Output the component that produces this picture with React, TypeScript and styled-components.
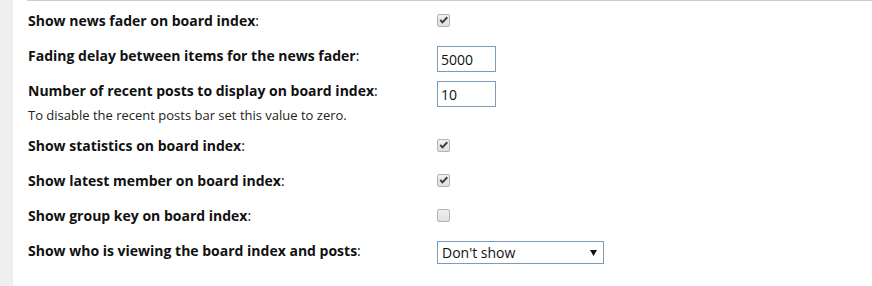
import styled, { createGlobalStyle } from "styled-components";

const GlobalStyle = createGlobalStyle`
	html, body {
		margin: 0;
		padding: 0;
		background: #fff;
	}
	body {
		font-family: "Open Sans", "Liberation Sans", Arial, sans-serif;
		color: #111;
	}
`;

const Page = styled.div`
	display: flex;
	min-height: 100vh;
`;

const SideStrip = styled.div`
	width: 13px;
	flex-shrink: 0;
	background-color: #efefef;
`;

const Panel = styled.div`
	flex: 1;
	margin-left: 14px;
	padding-left: 1px;
	border-top: 1px solid #cccccc;
`;

const Row = styled.div`
	display: flex;
	align-items: flex-start;
	padding: 10px 0 5px;
`;

const Term = styled.div`
	width: 409px;
	flex-shrink: 0;
	& > label {
		display: block;
		font-size: 14px;
		line-height: 20px;
		font-weight: 700;
		color: #111;
		& > span {
			font-weight: 400;
		}
	}
	& > .explain {
		margin-top: 9px;
		font-size: 13px;
		line-height: 11px;
		color: #222;
	}
`;

const Control = styled.div`
	height: 20px;
	display: flex;
	align-items: center;
	position: relative;
`;

const CheckBox = styled.span<{ $checked: boolean }>`
	display: inline-flex;
	align-items: center;
	justify-content: center;
	box-sizing: border-box;
	width: 13px;
	height: 13px;
	border: 1px solid #b3b3b3;
	border-radius: 2px;
	background: linear-gradient(#f0f0f0, #e0e0e0);
	margin-top: -1px;
	& > svg {
		display: ${(p) => (p.$checked ? "block" : "none")};
	}
`;

const TextInput = styled.input`
	box-sizing: border-box;
	align-self: flex-start;
	width: 59px;
	height: 26px;
	border: 1px solid #7d9ab6;
	padding: 0 3px;
	margin: 0;
	font-family: "Open Sans", "Liberation Sans", Arial, sans-serif;
	font-size: 14px;
	color: #111;
	outline: none;
`;

const SelectWrap = styled.div`
	position: relative;
	align-self: flex-start;
	& > svg {
		position: absolute;
		right: 7px;
		top: 9px;
		pointer-events: none;
	}
`;

const Select = styled.select`
	box-sizing: border-box;
	appearance: none;
	width: 167px;
	height: 23px;
	border: 1px solid #7d9ab6;
	border-radius: 0;
	background: #fff;
	padding: 0 4px;
	margin: 0;
	font-family: "Open Sans", "Liberation Sans", Arial, sans-serif;
	font-size: 14px;
	color: #111;
	outline: none;
`;

const Check = ({ checked }: { checked: boolean }) => (
	<CheckBox $checked={checked}>
		<svg width="11" height="11" viewBox="0 0 11 11">
			<path d="M1.5 5.6 L3 4.3 L4.4 5.9 L8.6 1.6 L10 3 L4.4 8.8 Z" fill="#3c3c3c" />
		</svg>
	</CheckBox>
);

type Setting = {
	label: string;
	explain?: string;
	kind: "check" | "text" | "select";
	checked?: boolean;
	value?: string;
};

const settings: Setting[] = [
	{ label: "Show news fader on board index", kind: "check", checked: true },
	{ label: "Fading delay between items for the news fader", kind: "text", value: "5000" },
	{
		label: "Number of recent posts to display on board index",
		kind: "text",
		value: "10",
		explain: "To disable the recent posts bar set this value to zero.",
	},
	{ label: "Show statistics on board index", kind: "check", checked: true },
	{ label: "Show latest member on board index", kind: "check", checked: true },
	{ label: "Show group key on board index", kind: "check", checked: false },
	{ label: "Show who is viewing the board index and posts", kind: "select", value: "Don't show" },
];

const App = () => {
	return (
		<>
			<GlobalStyle />
			<Page>
				<SideStrip />
				<Panel>
					{settings.map((s) => (
						<Row key={s.label}>
							<Term>
								<label>
									{s.label}
									<span>:</span>
								</label>
								{s.explain && <div className="explain">{s.explain}</div>}
							</Term>
							<Control>
								{s.kind === "check" && <Check checked={!!s.checked} />}
								{s.kind === "text" && <TextInput type="text" defaultValue={s.value} />}
								{s.kind === "select" && (
									<SelectWrap>
										<Select defaultValue={s.value}>
											<option>Don't show</option>
											<option>Show</option>
										</Select>
										<svg width="7" height="6" viewBox="0 0 7 6">
											<path d="M0 0 H7 L3.5 6 Z" fill="#111" />
										</svg>
									</SelectWrap>
								)}
							</Control>
						</Row>
					))}
				</Panel>
			</Page>
		</>
	);
};

export default App;
